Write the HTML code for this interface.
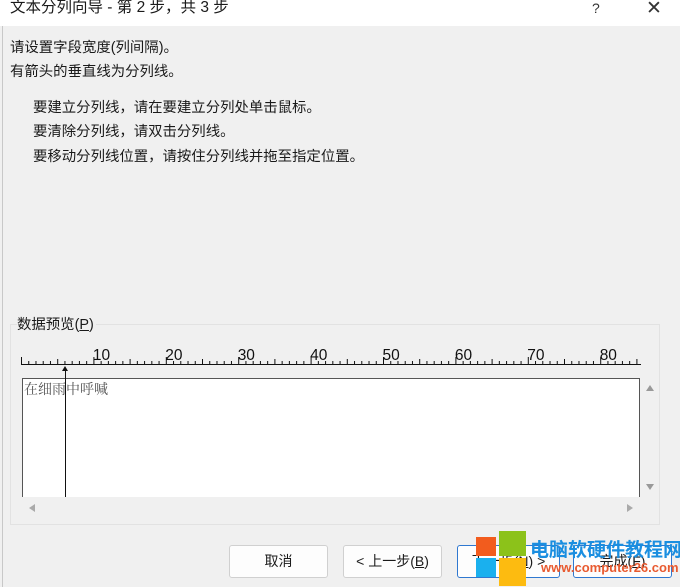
<!DOCTYPE html>
<html><head><meta charset="utf-8"><style>
*{margin:0;padding:0;box-sizing:border-box}
body{width:680px;height:587px;background:#f0f0f0;font-family:"Liberation Sans","Noto Sans CJK SC",sans-serif;font-size:14.4px;color:#1a1a1a;position:relative;overflow:hidden}
.a{position:absolute;white-space:nowrap}
.btn{position:absolute;top:545px;height:33px;width:99px;background:#fdfdfd;border:1px solid #d0d0d0;border-radius:3px;text-align:center;line-height:31px;font-size:14px}
</style></head><body>
<div class="a" style="left:0;top:0;width:680px;height:26px;background:#fff"></div>
<div class="a" style="left:2px;top:26px;width:1px;height:561px;background:#c8c8c8"></div>
<div class="a" style="left:10px;top:-2px;font-size:15.5px;line-height:20px">文本分列向导 - 第 2 步，共 3 步</div>
<div class="a" style="left:592px;top:0px;font-size:14px;color:#333">?</div>
<div class="a" style="left:646px;top:-3px;font-size:19px;color:#333">✕</div>
<div class="a" style="left:10px;top:36px">请设置字段宽度(列间隔)。</div>
<div class="a" style="left:10px;top:60px">有箭头的垂直线为分列线。</div>
<div class="a" style="left:33px;top:96px">要建立分列线，请在要建立分列处单击鼠标。</div>
<div class="a" style="left:33px;top:120px">要清除分列线，请双击分列线。</div>
<div class="a" style="left:33px;top:145px">要移动分列线位置，请按住分列线并拖至指定位置。</div>
<div class="a" style="left:10px;top:324px;width:650px;height:201px;border:1px solid #e2e2e2"></div>
<div class="a" style="left:17px;top:313px;background:#f0f0f0;padding-right:2px">数据预览(<u>P</u>)</div>
<svg class="a" style="left:0;top:340px" width="680" height="40" id="r"></svg>
<div class="a" style="left:22px;top:378px;width:618px;height:119px;background:#fff;border:1px solid #555;border-bottom:none"></div>
<div class="a" style="left:24px;top:379px;font-family:'Noto Serif CJK SC',serif;color:#555;font-size:14px">在细雨中呼喊</div>
<div class="a" style="left:65px;top:370px;width:1px;height:127px;background:#111"></div>
<div class="a" style="left:62px;top:366px;width:0;height:0;border-left:3px solid transparent;border-right:3px solid transparent;border-bottom:5px solid #111"></div>
<div class="a" style="left:646px;top:385px;border-left:4px solid transparent;border-right:4px solid transparent;border-bottom:6px solid #999"></div>
<div class="a" style="left:646px;top:484px;border-left:4px solid transparent;border-right:4px solid transparent;border-top:6px solid #999"></div>
<div class="a" style="left:29px;top:504px;border-top:4px solid transparent;border-bottom:4px solid transparent;border-right:6px solid #aaa"></div>
<div class="a" style="left:627px;top:504px;border-top:4px solid transparent;border-bottom:4px solid transparent;border-left:6px solid #aaa"></div>
<div class="btn" style="left:229px">取消</div>
<div class="btn" style="left:343px">&lt; 上一步(<u>B</u>)</div>
<div class="btn" style="left:457px;width:103px;border:1px solid #2f78d0">下一步(<u>N</u>) &gt;</div>
<div class="btn" style="left:573px;border:1px solid #2f78d0">完成(<u>F</u>)</div>
<div class="a" style="left:476px;top:537px;width:20px;height:19px;background:#f25c1e"></div>
<div class="a" style="left:499px;top:531px;width:27px;height:25px;background:#8cc21a"></div>
<div class="a" style="left:476px;top:558px;width:20px;height:19px;background:#1ab0ee"></div>
<div class="a" style="left:499px;top:558px;width:27px;height:28px;background:#fdbb10"></div>
<div class="a" style="left:530px;top:535px;font-size:19px;font-weight:bold;color:#1a8ee0">电脑软硬件教程网</div>
<div class="a" style="left:541px;top:560px;font-size:13px;font-weight:bold;color:#e85a30">www.computer26.com</div>
<script>
var s=document.getElementById('r'),h='<line x1="21" y1="24.5" x2="641" y2="24.5" stroke="#111"/>';
for(var i=0;i<=85;i++){var x=21.5+i*7.24;var l=i%10==0?7:(i%5==0?5:3);h+='<line x1="'+x+'" y1="'+(24-l)+'" x2="'+x+'" y2="24" stroke="#111"/>';
if(i%10==0&&i>0)h+='<text x="'+(x-1)+'" y="20" font-size="15.5" font-family="Liberation Sans" fill="#111">'+i+'</text>';}
s.innerHTML=h;
</script>
</body></html>
